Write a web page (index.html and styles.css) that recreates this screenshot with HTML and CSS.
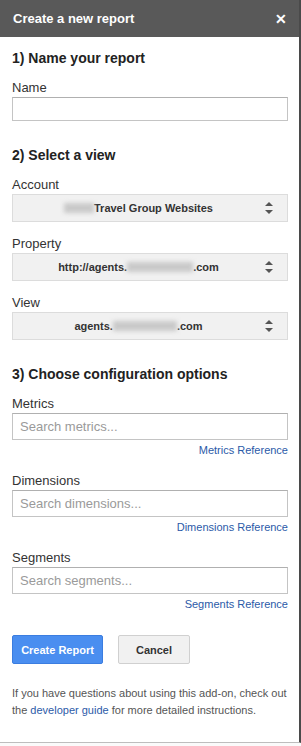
FILE: index.html
```html
<!DOCTYPE html>
<html lang="en">
<head>
<meta charset="UTF-8" />
<title>Create a new report</title>
<link rel="stylesheet" href="styles.css">
</head>
<body>

<div class="panel">
  <header class="titlebar">
    <span class="title">Create a new report</span>
    <span class="close">&#x2715;</span>
  </header>

  <div class="content">
    <h2>1) Name your report</h2>
    <label class="field-label">Name</label>
    <input type="text" class="text-input name-input" />

    <h2 class="section">2) Select a view</h2>
    <label class="field-label">Account</label>
    <div class="select">
      <span class="select-text"><span class="blur w30"></span>Travel Group Websites</span>
      <span class="spinner"></span>
    </div>

    <label class="field-label gap">Property</label>
    <div class="select">
      <span class="select-text">http://agents.<span class="blur w66"></span>.com</span>
      <span class="spinner"></span>
    </div>

    <label class="field-label gap">View</label>
    <div class="select">
      <span class="select-text">agents.<span class="blur w64"></span>.com</span>
      <span class="spinner"></span>
    </div>

    <h2 class="section">3) Choose configuration options</h2>
    <label class="field-label">Metrics</label>
    <input type="text" class="text-input" placeholder="Search metrics..." />
    <a class="ref" href="#">Metrics Reference</a>

    <label class="field-label gap-lg">Dimensions</label>
    <input type="text" class="text-input" placeholder="Search dimensions..." />
    <a class="ref" href="#">Dimensions Reference</a>

    <label class="field-label gap-lg">Segments</label>
    <input type="text" class="text-input" placeholder="Search segments..." />
    <a class="ref" href="#">Segments Reference</a>

    <div class="buttons">
      <button class="btn primary">Create Report</button>
      <button class="btn">Cancel</button>
    </div>

    <p class="help">If you have questions about using this add-on, check out the <a href="#">developer guide</a> for more detailed instructions.</p>
  </div>
</div>

</body>
</html>
```

FILE: styles.css
```css
body {
  margin: 0;
  padding: 0;
  background: #fafafa;
  font-family: "Liberation Sans", Arial, sans-serif;
}

.panel {
  width: 299px;
  height: 742px;
  background: #ffffff;
  border-right: 2px solid #4a4a4a;
  border-bottom: 1px solid #bdbdbd;
}

.titlebar {
  height: 37px;
  background: #595959;
  color: #ffffff;
  display: flex;
  align-items: center;
  justify-content: space-between;
  padding: 0 12px 0 13px;
}

.title {
  font-weight: bold;
  font-size: 13px;
}

.close {
  font-size: 14px;
  font-weight: bold;
}

.content {
  padding: 0 11px 0 12px;
  display: flex;
  flex-direction: column;
}

h2 {
  margin: 12px 0 0;
  font-size: 14px;
  line-height: 18px;
  color: #222;
}

h2.section {
  margin-top: 25px;
}

.field-label {
  display: block;
  margin-top: 13px;
  font-size: 13px;
  line-height: 16px;
  color: #333;
}

.field-label.gap {
  margin-top: 14px;
}

.field-label.gap-lg {
  margin-top: 16px;
}

.text-input {
  box-sizing: border-box;
  width: 276px;
  height: 27px;
  margin-top: 1px;
  border: 1px solid #c4c4c4;
  border-top-color: #b0b0b0;
  padding: 0 7px;
  font-family: inherit;
  font-size: 13px;
  color: #333;
}

.text-input::placeholder {
  color: #9a9a9a;
}

.name-input {
  height: 24px;
}

.select {
  box-sizing: border-box;
  width: 276px;
  height: 28px;
  margin-top: 1px;
  background: #f1f1f1;
  border: 1px solid #dcdcdc;
  display: flex;
  align-items: center;
}

.select-text {
  flex: 1;
  text-align: center;
  font-size: 11px;
  font-weight: bold;
  color: #333;
  padding-right: 0;
}

.blur {
  display: inline-block;
  height: 10px;
  vertical-align: -1px;
  background: #c9c9c9;
  filter: blur(2px);
}

.w30 { width: 30px; }
.w66 { width: 66px; }
.w64 { width: 64px; }

.spinner {
  width: 10px;
  height: 12px;
  margin-right: 13px;
  position: relative;
}

.spinner::before,
.spinner::after {
  content: "";
  position: absolute;
  left: 1px;
  border-left: 4px solid transparent;
  border-right: 4px solid transparent;
}

.spinner::before {
  top: 0;
  border-bottom: 4px solid #555;
}

.spinner::after {
  bottom: 0;
  border-top: 4px solid #555;
}

.ref {
  align-self: flex-end;
  margin-top: 4px;
  font-size: 11px;
  line-height: 13px;
  color: #2b5aa8;
  text-decoration: none;
}

.buttons {
  display: flex;
  gap: 15px;
  margin-top: 24px;
}

.btn {
  height: 29px;
  border-radius: 2px;
  border: 1px solid #d0d0d0;
  background: #f1f1f1;
  color: #333;
  font-family: inherit;
  font-size: 11px;
  font-weight: bold;
  width: 72px;
  padding: 0;
}

.btn.primary {
  width: 91px;
  background: #4a8ef0;
  border-color: #3b7de0;
  color: #fff;
}

.help {
  margin: 21px 0 0;
  font-size: 11px;
  line-height: 17px;
  color: #555;
}

.help a {
  color: #2b5aa8;
  text-decoration: none;
}
```
